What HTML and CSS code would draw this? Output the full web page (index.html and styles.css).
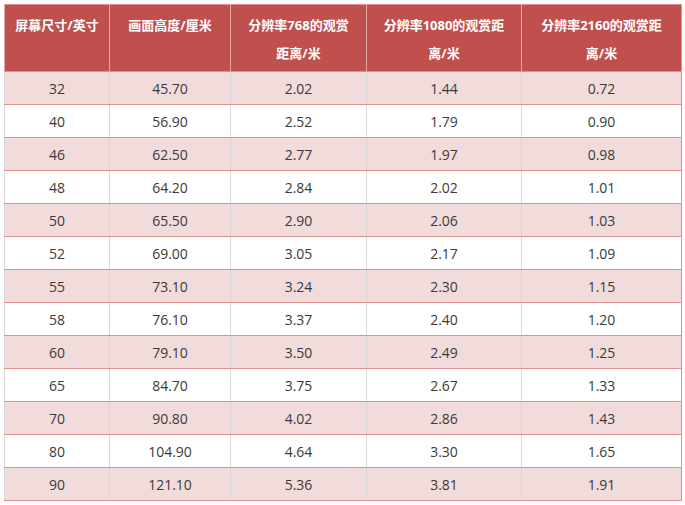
FILE: index.html
```html
<!DOCTYPE html>
<html lang="zh">
<head>
<meta charset="utf-8">
<title>屏幕尺寸与观赏距离</title>
<link rel="stylesheet" href="styles.css">
</head>
<body>
<table class="dist">
  <colgroup>
    <col class="c1"><col class="c2"><col class="c3"><col class="c4"><col class="c5">
  </colgroup>
  <thead>
    <tr>
      <th>屏幕尺寸/英寸</th>
      <th>画面高度/厘米</th>
      <th>分辨率768的观赏<br>距离/米</th>
      <th>分辨率1080的观赏距<br>离/米</th>
      <th>分辨率2160的观赏距<br>离/米</th>
    </tr>
  </thead>
  <tbody>
    <tr class="odd"><td>32</td><td>45.70</td><td>2.02</td><td>1.44</td><td>0.72</td></tr>
    <tr><td>40</td><td>56.90</td><td>2.52</td><td>1.79</td><td>0.90</td></tr>
    <tr class="odd"><td>46</td><td>62.50</td><td>2.77</td><td>1.97</td><td>0.98</td></tr>
    <tr><td>48</td><td>64.20</td><td>2.84</td><td>2.02</td><td>1.01</td></tr>
    <tr class="odd"><td>50</td><td>65.50</td><td>2.90</td><td>2.06</td><td>1.03</td></tr>
    <tr><td>52</td><td>69.00</td><td>3.05</td><td>2.17</td><td>1.09</td></tr>
    <tr class="odd"><td>55</td><td>73.10</td><td>3.24</td><td>2.30</td><td>1.15</td></tr>
    <tr><td>58</td><td>76.10</td><td>3.37</td><td>2.40</td><td>1.20</td></tr>
    <tr class="odd"><td>60</td><td>79.10</td><td>3.50</td><td>2.49</td><td>1.25</td></tr>
    <tr><td>65</td><td>84.70</td><td>3.75</td><td>2.67</td><td>1.33</td></tr>
    <tr class="odd"><td>70</td><td>90.80</td><td>4.02</td><td>2.86</td><td>1.43</td></tr>
    <tr><td>80</td><td>104.90</td><td>4.64</td><td>3.30</td><td>1.65</td></tr>
    <tr class="odd"><td>90</td><td>121.10</td><td>5.36</td><td>3.81</td><td>1.91</td></tr>
  </tbody>
</table>
</body>
</html>
```
FILE: styles.css
```css
html, body {
  margin: 0;
  padding: 0;
  background: #ffffff;
}
body {
  padding: 4px 0 0 4px;
  font-family: "Open Sans", "Noto Sans CJK SC", sans-serif;
}
.dist {
  border-collapse: collapse;
  table-layout: fixed;
  width: 677px;
  border: 1px solid #e0908f;
}
.c1 { width: 105px; }
.c2 { width: 121px; }
.c3 { width: 136px; }
.c4 { width: 155px; }
.c5 { width: 160px; }
.dist th {
  background: #c0504d;
  color: #ffffff;
  font-size: 13px;
  font-weight: bold;
  line-height: 28px;
  height: 60px;
  padding: 6px 4px 0;
  vertical-align: top;
  text-align: center;
  border-left: 1px solid #e2a9a8;
  border-bottom: 1px solid #e0908f;
  white-space: nowrap;
}
.dist td {
  height: 32px;
  padding: 0 4px;
  text-align: center;
  vertical-align: middle;
  font-size: 14px;
  color: #3a3a3a;
  border-left: 1px solid #d8d8d8;
  border-bottom: 1px solid #e0908f;
}
.dist tr.odd td {
  background: #f2dcdb;
}
```
